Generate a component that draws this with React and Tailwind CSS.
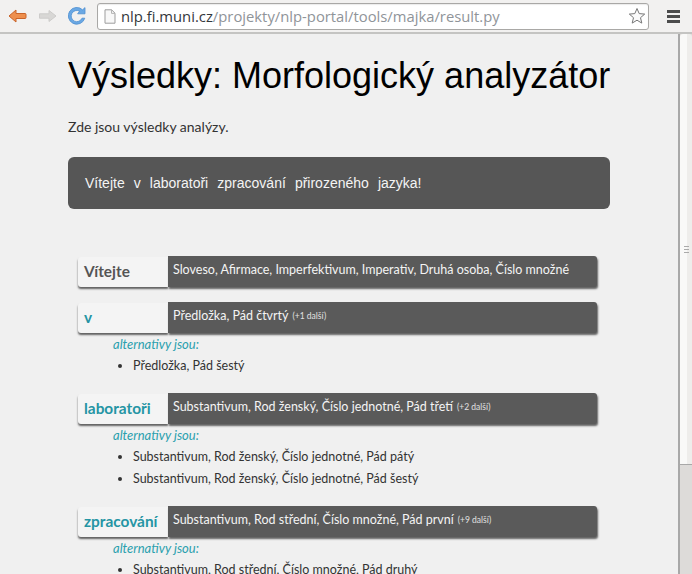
import React from 'react';

const words = [
  {
    word: 'Vítejte',
    plain: true,
    tags: 'Sloveso, Afirmace, Imperfektivum, Imperativ, Druhá osoba, Číslo množné',
    alts: []
  },
  {
    word: 'v',
    tags: 'Předložka, Pád čtvrtý',
    more: '(+1 další)',
    alts: ['Předložka, Pád šestý']
  },
  {
    word: 'laboratoři',
    tags: 'Substantivum, Rod ženský, Číslo jednotné, Pád třetí',
    more: '(+2 další)',
    alts: ['Substantivum, Rod ženský, Číslo jednotné, Pád pátý', 'Substantivum, Rod ženský, Číslo jednotné, Pád šestý']
  },
  {
    word: 'zpracování',
    tags: 'Substantivum, Rod střední, Číslo množné, Pád první',
    more: '(+9 další)',
    alts: ['Substantivum, Rod střední, Číslo množné, Pád druhý']
  }
];

function Toolbar() {
  return (
    <div className="flex h-[34px] shrink-0 items-center border-b-2 border-[#c4c4c2] bg-[#f2f1f0]">
      <svg width="19" height="16" viewBox="0 0 19 16" className="ml-[8px]">
        <path d="M1 8 L8 2 V5.5 H17 a1 1 0 0 1 1 1 V9.5 a1 1 0 0 1 -1 1 H8 V14 Z" fill="#ee8f4d" stroke="#c9642a" strokeWidth="1" strokeLinejoin="round" />
      </svg>
      <svg width="19" height="16" viewBox="0 0 19 16" className="ml-[11px]">
        <path d="M18 8 L11 2.5 V5.8 H1.5 V10.2 H11 V13.5 Z" fill="#d8d7d5" stroke="#cdccca" strokeWidth="1" strokeLinejoin="round" />
      </svg>
      <svg width="18" height="18" viewBox="0 0 18 18" className="ml-[11px]">
        <path d="M14 11.2 A5.6 5.6 0 1 1 11.6 4.2 L9.6 6.8 H17 V0.6 L14.6 2.8 A8.4 8.4 0 1 0 16.8 11.2 Z" fill="#6aa8e4" stroke="#4f8fd0" strokeWidth="0.8" strokeLinejoin="round" />
      </svg>
      <div className="ml-[11px] flex h-[27px] w-[552px] items-center rounded-[3px] border border-[#a9a8a6] bg-white shadow-[inset_0_1px_1px_rgba(0,0,0,0.08)]">
        <svg width="12" height="15" viewBox="0 0 12 15" className="ml-[6px]">
          <path d="M1 .8 H7.6 L11 4.2 V14.2 H1 Z" fill="#f8f8f8" stroke="#9d9d9d" strokeWidth="1" />
          <path d="M7.5 1 V4.4 H11" fill="none" stroke="#b5b5b5" strokeWidth="1" />
        </svg>
        <div className="ml-[5px] font-['Open_Sans',sans-serif] text-[14.8px] leading-none whitespace-nowrap text-[#8f9499]">
          <span className="text-[#33373b]">nlp.fi.muni.cz</span>/projekty/nlp-portal/tools/majka/result.py
        </div>
        <svg width="18" height="18" viewBox="0 0 18 18" className="mr-[2px] ml-auto">
          <path d="M9 1.5 L11.2 6.6 L16.7 7.1 L12.5 10.7 L13.8 16.1 L9 13.2 L4.2 16.1 L5.5 10.7 L1.3 7.1 L6.8 6.6 Z" fill="#fafafa" stroke="#777" strokeWidth="1" strokeLinejoin="round" />
        </svg>
      </div>
      <div className="ml-[18px] flex w-[13px] flex-col gap-[2px]">
        <div className="h-[3px] bg-[#4c4c4c]"></div>
        <div className="h-[3px] bg-[#4c4c4c]"></div>
        <div className="h-[3px] bg-[#4c4c4c]"></div>
      </div>
    </div>
  );
}

function Scrollbar() {
  return (
    <div className="flex w-[14px] shrink-0 flex-col border-l-2 border-[#a8a8a8] bg-[#dddbd9]">
      <div className="flex h-[431px] flex-col items-center justify-center gap-[2px] rounded-t-[3px] border-b border-[#a8a8a8] bg-[linear-gradient(90deg,#f9f9f8_0,#f9f9f8_7px,#eeedeb_7px)]">
        <div className="h-px w-[5px] bg-[#aaa]"></div>
        <div className="h-px w-[5px] bg-[#aaa]"></div>
        <div className="h-px w-[5px] bg-[#aaa]"></div>
      </div>
    </div>
  );
}

function WordRow({ item }) {
  return (
    <div className="mb-[15px]">
      <div className="flex items-start">
        <div
          className={`mt-px flex h-[30px] w-[90px] items-center rounded-l-[3px] bg-[#f4f4f4] pb-px pl-[6px] text-[15.4px] font-bold shadow-[0_2px_2px_rgba(0,0,0,0.6)] ${
            item.plain ? 'text-[#555]' : 'text-[#2595a4]'
          }`}
        >
          {item.word}
        </div>
        <div className="flex h-[31px] w-[429px] items-center rounded-r-[3px] bg-[#5a5a5a] pb-[3px] pl-[5px] text-[12.5px] whitespace-nowrap text-[#f4f4f4] shadow-[1px_2px_2px_rgba(0,0,0,0.6)]">
          {item.tags}
          {item.more && <span className="ml-[4px] text-[8.5px] text-[#e2e2e2]">{item.more}</span>}
        </div>
      </div>
      {item.alts.length > 0 && (
        <div className="mt-[3px] ml-[35px] pb-px">
          <div className="text-[13px] leading-[17px] text-[#2ba0ae] italic">alternativy jsou:</div>
          <ul className="mt-[2px] ml-[20px] list-disc text-[12.5px] leading-[22px] text-[#333]">
            {item.alts.map(alt => (
              <li key={alt}>{alt}</li>
            ))}
          </ul>
        </div>
      )}
    </div>
  );
}

export default function App() {
  return (
    <div className="flex h-[574px] w-[692px] flex-col overflow-hidden bg-[#f0f0f0]">
      <Toolbar />
      <div className="flex min-h-0 flex-1">
        <div className="min-w-0 flex-1 overflow-hidden px-[68px] font-['Lato',sans-serif]">
          <h1 className="mt-[17px] font-['Liberation_Sans',sans-serif] text-[36px] leading-[50px] font-normal whitespace-nowrap text-black">
            Výsledky: Morfologický analyzátor
          </h1>
          <p className="mt-[17px] text-[14px] leading-[18px] text-[#333]">Zde jsou výsledky analýzy.</p>
          <div className="mt-[21px] flex h-[52px] w-[542px] items-center rounded-[6px] bg-[#565656] pl-[17px] font-['Liberation_Sans',sans-serif] text-[14px] [word-spacing:5.2px] text-[#f4f4f4]">
            Vítejte v laboratoři zpracování přirozeného jazyka!
          </div>
          <div className="mt-[47px] ml-[10px]">
            {words.map(item => (
              <WordRow key={item.word} item={item} />
            ))}
          </div>
        </div>
        <Scrollbar />
      </div>
    </div>
  );
}
